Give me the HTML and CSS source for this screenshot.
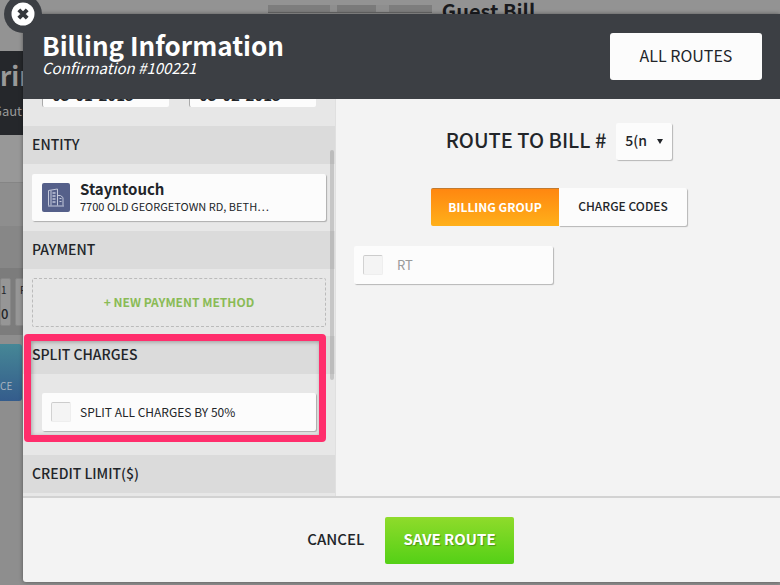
FILE: index.html
```html
<!DOCTYPE html>
<html lang="en">
<head>
    <meta charset="UTF-8">
    <meta name="viewport" content="width=device-width, initial-scale=1.0">
    <title>Billing Information</title>
    <link rel="stylesheet" href="styles.css">
</head>
<body>
    <!-- Guest bill page, dimmed behind the dialog -->
    <div class="page">
        <div class="page-top">
            <span class="guest-name"></span>
            <span class="page-title">Guest Bill</span>
        </div>
        <div class="guest-bar">
            <div class="guest-heading">rin</div>
            <div class="guest-sub">Gaut</div>
        </div>
        <div class="band band-light"></div>
        <div class="band band-mid"></div>
        <div class="band band-dark"></div>
        <div class="days">
            <div class="day day-first"><span>1</span><b>0</b></div>
            <div class="day"><span>R</span></div>
        </div>
        <div class="balance">CE</div>
    </div>

    <div class="modal">
        <button class="close" type="button" aria-label="Close">
            <svg width="38" height="38" viewBox="0 0 38 38">
                <circle cx="19" cy="19" r="19" fill="#3c3f44"/>
                <circle cx="19" cy="19" r="11.5" fill="#fff"/>
                <path d="M14.8 14.8l8.4 8.4M23.2 14.8l-8.4 8.4" stroke="#34373b" stroke-width="4"/>
            </svg>
        </button>

        <header class="modal-header">
            <div class="modal-titles">
                <h1>Billing Information</h1>
                <em>Confirmation #100221</em>
            </div>
            <button class="all-routes" type="button">ALL ROUTES</button>
        </header>

        <div class="modal-body">
            <section class="details">
                <div class="details-scroll">
                    <div class="dates">
                        <input type="text" value="03-01-2015" aria-label="From date">
                        <input type="text" value="03-02-2015" aria-label="To date">
                    </div>

                    <h2>ENTITY</h2>
                    <div class="block">
                        <div class="entity">
                            <svg class="entity-icon" width="28" height="29" viewBox="0 0 28 29">
                                <rect width="28" height="29" rx="2" fill="#55608a"/>
                                <g fill="none" stroke="#c3c8da" stroke-width="1">
                                    <path d="M6.5 22.5V7.5l9-1.5v16.5M9 7.5v15M15.5 12.5h3l2.5 2v8M6 23h16"/>
                                    <path d="M12 9v12" stroke-width="3" stroke-dasharray="2 1" stroke="#a4abc6"/>
                                    <path d="M18.5 15v6" stroke-width="2" stroke-dasharray="1 2"/>
                                </g>
                            </svg>
                            <div class="entity-text">
                                <strong>Stayntouch</strong>
                                <span>7700 OLD GEORGETOWN RD, BETH…</span>
                            </div>
                        </div>
                    </div>

                    <h2>PAYMENT</h2>
                    <div class="block block-payment">
                        <button class="new-payment" type="button">+ NEW PAYMENT METHOD</button>
                    </div>

                    <h2>SPLIT CHARGES</h2>
                    <div class="block block-split">
                        <label class="check-row">
                            <input type="checkbox">
                            <span>SPLIT ALL CHARGES BY 50%</span>
                        </label>
                    </div>

                    <h2>CREDIT LIMIT($)</h2>
                </div>
                <div class="scroll-thumb"></div>
                <div class="highlight"></div>
            </section>

            <section class="routing">
                <div class="bill-row">
                    <label for="bill">ROUTE TO BILL #</label>
                    <div class="bill-select">
                        <select id="bill">
                            <option>5(n</option>
                        </select>
                        <i class="arrow"></i>
                    </div>
                </div>

                <div class="tabs">
                    <button class="tab active" type="button">BILLING GROUP</button>
                    <button class="tab" type="button">CHARGE CODES</button>
                </div>

                <div class="groups">
                    <label class="check-row muted">
                        <input type="checkbox">
                        <span>RT</span>
                    </label>
                </div>
            </section>
        </div>

        <footer class="modal-footer">
            <button class="cancel" type="button">CANCEL</button>
            <button class="save" type="button">SAVE ROUTE</button>
        </footer>
    </div>
</body>
</html>
```

FILE: styles.css
```css
* {
    margin: 0;
    padding: 0;
    box-sizing: border-box;
}

body {
    font-family: "Noto Sans CJK SC", "Open Sans", sans-serif;
    color: #222529;
    background: #8e8e8e;
    height: 100vh;
    overflow: hidden;
}

button,
input,
select {
    font-family: inherit;
    color: inherit;
    border: none;
}

button {
    cursor: pointer;
}

/* Page behind the dialog */
.page {
    height: 100vh;
    overflow: hidden;
    background: #8e8e8e;
}

.page-top {
    height: 51px;
    display: flex;
    justify-content: center;
    gap: 10px;
    padding-left: 23px;
    background: #939393;
}

.guest-name {
    width: 164px;
    height: 8px;
    margin-top: 5px;
    background: linear-gradient(90deg, #7d7d7d 38%, #8e8e8e 38%, #8e8e8e 42%, #7a7a7a 42%, #7a7a7a 66%, #8e8e8e 66%, #8e8e8e 74%, #7d7d7d 74%);
    border-bottom: 1px solid #666;
}

.page-title {
    font-size: 20px;
    line-height: 22px;
    font-weight: 700;
    color: #1a1b1e;
}

.guest-bar {
    height: 84px;
    padding-top: 6px;
    background: #25272b;
    color: #999;
}

.guest-heading {
    font-size: 26px;
    line-height: 36px;
    font-weight: 700;
    width: 23px;
}

.guest-sub {
    width: 22px;
    display: flex;
    justify-content: flex-end;
    font-size: 13px;
    line-height: 36px;
}

.band-light {
    height: 48px;
    background: #989898;
    border-bottom: 1px solid #858585;
}

.band-mid {
    height: 43px;
    background: #8e8e8e;
}

.band-dark {
    height: 42px;
    background: #878787;
}

.days {
    height: 67px;
    padding-top: 10px;
    display: flex;
    gap: 4px;
    background: #7c7c7c;
}

.day {
    width: 80px;
    height: 48px;
    padding: 2px 4px;
    background: #969696;
    border: 1px solid #878787;
    border-radius: 2px;
    font-size: 10px;
    line-height: 18px;
}

.day-first {
    width: 11px;
    padding: 2px 0;
    display: flex;
    flex-direction: column;
    align-items: flex-start;
}

.day-first b {
    font-size: 13px;
    line-height: 30px;
    font-weight: 500;
}

.balance {
    width: 22px;
    height: 57px;
    margin-top: 9px;
    padding-top: 32px;
    background: linear-gradient(#468796, #345c8c);
    border-radius: 0 3px 3px 0;
    color: #a9b4bf;
    font-size: 10px;
    line-height: 20px;
}

/* Dialog */
.modal {
    position: absolute;
    inset: 14px 0 3px 23px;
    display: flex;
    flex-direction: column;
    background: #f3f3f3;
    border-radius: 0 0 0 3px;
    box-shadow: 0 0 4px rgba(0, 0, 0, 0.4);
}

.close {
    position: absolute;
    left: -19px;
    top: -19px;
    width: 38px;
    height: 38px;
    background: none;
}

.close svg {
    display: block;
}

.modal-header {
    height: 85px;
    flex: none;
    display: flex;
    align-items: center;
    justify-content: space-between;
    padding: 0 18px 0 19px;
    background: #3c3f44;
    color: #fff;
}

.modal-titles {
    padding-bottom: 4px;
}

.modal-titles h1 {
    font-size: 26px;
    line-height: 26px;
    font-weight: 700;
}

.modal-titles em {
    display: block;
    font-size: 15px;
    line-height: 20px;
}

.all-routes {
    width: 152px;
    height: 47px;
    padding-bottom: 4px;
    background: #fcfcfc;
    border-radius: 3px;
    color: #222529;
    font-size: 16px;
}

.modal-body {
    flex: 1;
    min-height: 0;
    display: flex;
}

.details {
    position: relative;
    width: 313px;
    flex: none;
    background: #e7e7e7;
    border-right: 1px solid #e0e0e0;
}

.details-scroll {
    height: 100%;
    overflow: hidden;
}

/* list is scrolled past the top of the dates */
.dates {
    display: flex;
    gap: 20px;
    margin-top: -30px;
    padding: 0 19px 19px;
}

.dates input {
    flex: 1;
    min-width: 0;
    height: 38px;
    padding: 12px 9px 0;
    background: #fcfcfc;
    border-left: 1px solid #aaa;
    border-radius: 2px;
    font-size: 15px;
    font-weight: 700;
}

.details h2 {
    height: 38px;
    padding-left: 9px;
    background: #dbdbdb;
    font-size: 14px;
    line-height: 36px;
    font-weight: 500;
}

.block {
    padding: 10px 9px;
}

.entity {
    height: 47px;
    display: flex;
    align-items: center;
    gap: 10px;
    padding: 0 10px;
    background: #fcfcfc;
    border-radius: 2px;
    box-shadow: 1px 1px 1px rgba(0, 0, 0, 0.25);
}

.entity-icon {
    flex: none;
}

.entity-text {
    padding-bottom: 2px;
}

.entity-text strong {
    display: block;
    font-size: 15px;
    line-height: 18px;
    font-weight: 700;
}

.entity-text span {
    display: block;
    font-size: 11px;
    line-height: 16px;
    white-space: nowrap;
}

.block-payment {
    padding: 9px;
}

.new-payment {
    display: block;
    width: 100%;
    height: 49px;
    padding-bottom: 3px;
    background: none;
    border: 1px dashed #bbb;
    border-radius: 2px;
    color: #8abb56;
    font-size: 12px;
    font-weight: 700;
}

.block-split {
    padding: 19px 19px 24px;
}

.check-row {
    height: 38px;
    display: flex;
    align-items: center;
    gap: 9px;
    padding: 0 9px;
    background: #fcfcfc;
    border-radius: 2px;
    box-shadow: 1px 1px 1px rgba(0, 0, 0, 0.25);
    font-size: 12px;
}

.check-row span {
    padding-bottom: 2px;
}

.check-row input {
    appearance: none;
    width: 20px;
    height: 20px;
    background: #f4f4f4;
    border: 1px solid #eee;
    border-top-color: #ccc;
    border-left-color: #d2d2d2;
    border-radius: 2px;
}

.scroll-thumb {
    position: absolute;
    top: 51px;
    right: 1px;
    width: 4px;
    height: 230px;
    background: rgba(0, 0, 0, 0.14);
    border-radius: 2px;
}

/* Marks the split charges option */
.highlight {
    position: absolute;
    top: 235px;
    left: 1px;
    right: 9px;
    height: 108px;
    border: 7px solid #ff2e6c;
    border-radius: 4px;
    box-shadow: inset 1px 1px 4px rgba(0, 0, 0, 0.3);
    pointer-events: none;
}

.routing {
    flex: 1;
    padding: 24px 16px 24px 18px;
}

.bill-row {
    display: flex;
    align-items: center;
    justify-content: center;
    gap: 10px;
}

.bill-row label {
    padding-bottom: 4px;
    font-size: 20px;
    line-height: 30px;
    font-weight: 500;
}

.bill-select {
    display: grid;
    align-items: center;
}

.bill-select select,
.bill-select .arrow {
    grid-area: 1 / 1;
}

.bill-select select {
    appearance: none;
    width: 56px;
    height: 37px;
    padding: 0 9px 3px;
    background: #fcfcfc;
    border-radius: 2px;
    box-shadow: 1px 1px 1px rgba(0, 0, 0, 0.25);
    font-size: 14px;
    font-weight: 500;
}

.arrow {
    justify-self: end;
    margin-right: 9px;
    border: 3px solid transparent;
    border-top: 5px solid #222529;
    border-bottom: none;
    pointer-events: none;
}

.tabs {
    display: flex;
    justify-content: center;
    margin-top: 28px;
}

.tab {
    width: 128px;
    height: 38px;
    padding-bottom: 3px;
    background: #fcfcfc;
    border-radius: 0 2px 2px 0;
    box-shadow: 1px 1px 1px rgba(0, 0, 0, 0.25);
    font-size: 12px;
    font-weight: 500;
}

.tab.active {
    background: linear-gradient(#ff8710, #ffb01a);
    border-top: 1px solid #c07a30;
    border-radius: 2px 0 0 2px;
    box-shadow: none;
    color: #fff;
    font-weight: 700;
}

.groups {
    display: grid;
    grid-template-columns: repeat(2, 199px);
    gap: 10px;
    margin-top: 20px;
}

.muted {
    gap: 14px;
    color: #9a9a9a;
    font-size: 13px;
}

.modal-footer {
    height: 86px;
    flex: none;
    display: flex;
    align-items: center;
    justify-content: center;
    gap: 3px;
    border-top: 2px solid #d2d2d2;
}

.modal-footer button {
    height: 47px;
    padding: 0 18px 4px;
    font-size: 15px;
    font-weight: 500;
}

.modal-footer .cancel {
    background: none;
}

.modal-footer .save {
    background: linear-gradient(#8fdb2b, #54d016);
    border-radius: 2px;
    color: #fff;
    font-weight: 700;
    text-shadow: 1px 1px 1px rgba(0, 0, 0, 0.3);
}
```
